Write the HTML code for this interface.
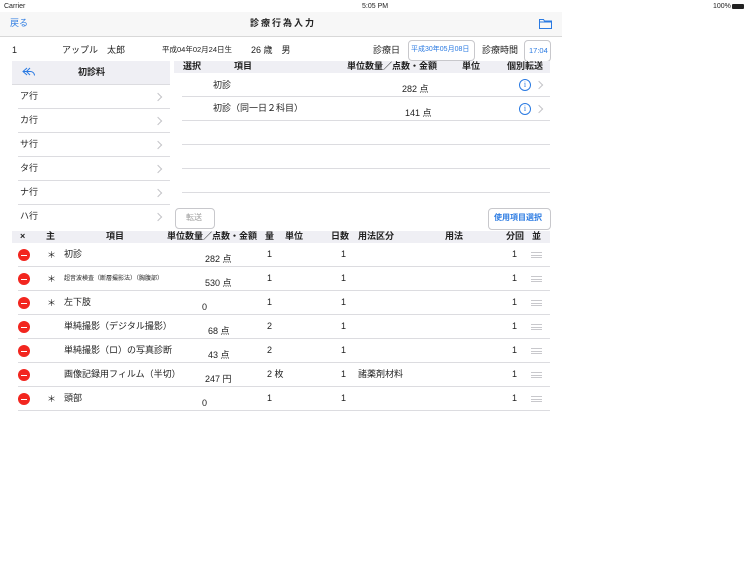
<!DOCTYPE html>
<html><head><meta charset="utf-8"><style>
body{margin:0;width:750px;height:562px;background:#fff;font-family:"Liberation Sans","Noto Sans CJK JP",sans-serif;font-size:9px;color:#222;position:relative;overflow:hidden}
.a{position:absolute;white-space:nowrap;line-height:1}
.b{font-weight:bold}
.blue{color:#2a7ae2}
.hl{position:absolute;height:1px;background:#dcdce0}
.bar{position:absolute;background:#efeff4}
.chev{position:absolute;width:5px;height:5px;border-right:1px solid #c4c4c8;border-top:1px solid #c4c4c8;transform:rotate(45deg)}
.minus{position:absolute;width:12px;height:12px;border-radius:50%;background:#f2261f}
.minus:after{content:"";position:absolute;left:3px;top:5.5px;width:6px;height:1.3px;background:#fff}
.grip{position:absolute;width:11px;height:4px;border-top:1px solid #c8c8cc;border-bottom:1px solid #c8c8cc}
.grip:after{content:"";position:absolute;left:0;top:1.5px;width:11px;height:1px;background:#c8c8cc}
.info{position:absolute;width:10px;height:10px;border:1px solid #2a7ae2;border-radius:50%;color:#2a7ae2;font-size:8px;text-align:center;line-height:10px;font-family:"Liberation Serif",serif}
.btn{position:absolute;border:1px solid #c8c8cc;border-radius:4px;background:#fff}
</style></head><body>
<div class="a" style="left:4px;top:3px;font-size:7px">Carrier ︎</div>
<div class="a" style="left:362px;top:3px;font-size:7px">5:05 PM</div>
<div class="a" style="left:713px;top:3px;font-size:7px">100%</div>
<div style="position:absolute;left:732px;top:4px;width:12px;height:5px;background:#222;border-radius:1px"></div>
<div style="position:absolute;left:0;top:12px;width:562px;height:24px;background:#f7f7f7;border-bottom:1px solid #d8d8d8"></div>
<div class="a blue" style="left:10px;top:19px">戻る</div>
<div class="a b" style="left:250px;top:19px;letter-spacing:2px">診療行為入力</div>
<svg style="position:absolute;left:539px;top:18px" width="13" height="11"><path d="M0.5 1.5h4l1 1.5h7v7.5h-12z M0.5 4h12" fill="none" stroke="#2a7ae2" stroke-width="1"/></svg>

<div class="a" style="left:12px;top:46px">1</div>
<div class="a" style="left:62px;top:46px">アップル　太郎</div>
<div class="a" style="left:162px;top:46px;font-size:7.5px">平成04年02月24日生</div>
<div class="a" style="left:251px;top:46px">26 歳　男</div>
<div class="a" style="left:373px;top:46px">診療日</div>
<div class="btn" style="left:408px;top:40px;width:65px;height:19px"></div>
<div class="a blue" style="left:411px;top:46px;font-size:7px">平成30年05月08日</div>
<div class="a" style="left:482px;top:46px">診療時間</div>
<div class="btn" style="left:524px;top:40px;width:25px;height:20px"></div>
<div class="a blue" style="left:529px;top:47px;font-size:7.5px">17:04</div>

<div class="bar" style="left:12px;top:61px;width:158px;height:23px"></div>
<svg style="position:absolute;left:22px;top:67px" width="14" height="10"><path d="M5 1L1 4.5L5 8 M1.5 4.5h7a4 4 0 0 1 4 4" fill="none" stroke="#2a7ae2" stroke-width="1"/><path d="M8 1L4.5 4.5L8 8" fill="none" stroke="#2a7ae2" stroke-width="1"/></svg>
<div class="a b" style="left:78px;top:68px">初診料</div>
<div class="hl" style="left:12px;top:84px;width:158px"></div>
<div class="a" style="left:20px;top:92px">ア行</div><div class="chev" style="left:155px;top:94px"></div><div class="hl" style="left:18px;top:108px;width:152px"></div>
<div class="a" style="left:20px;top:116px">カ行</div><div class="chev" style="left:155px;top:118px"></div><div class="hl" style="left:18px;top:132px;width:152px"></div>
<div class="a" style="left:20px;top:140px">サ行</div><div class="chev" style="left:155px;top:142px"></div><div class="hl" style="left:18px;top:156px;width:152px"></div>
<div class="a" style="left:20px;top:164px">タ行</div><div class="chev" style="left:155px;top:166px"></div><div class="hl" style="left:18px;top:180px;width:152px"></div>
<div class="a" style="left:20px;top:188px">ナ行</div><div class="chev" style="left:155px;top:190px"></div><div class="hl" style="left:18px;top:204px;width:152px"></div>
<div class="a" style="left:20px;top:212px">ハ行</div><div class="chev" style="left:155px;top:214px"></div>

<div class="bar" style="left:174px;top:61px;width:376px;height:12px"></div>
<div class="a b" style="left:183px;top:62px">選択</div>
<div class="a b" style="left:234px;top:62px">項目</div>
<div class="a b" style="left:347px;top:62px">単位数量／点数・金額</div>
<div class="a b" style="left:462px;top:62px">単位</div>
<div class="a b" style="left:507px;top:62px">個別転送</div>
<div class="a" style="left:213px;top:81px">初診</div>
<div class="a" style="left:402px;top:85px">282 点</div>
<div class="info" style="left:519px;top:79px">i</div><div class="chev" style="left:536px;top:82px"></div>
<div class="hl" style="left:182px;top:96px;width:368px"></div>
<div class="a" style="left:213px;top:104px">初診（同一日２科目）</div>
<div class="a" style="left:405px;top:109px">141 点</div>
<div class="info" style="left:519px;top:103px">i</div><div class="chev" style="left:536px;top:106px"></div>
<div class="hl" style="left:182px;top:120px;width:368px"></div>
<div class="hl" style="left:182px;top:144px;width:368px"></div>
<div class="hl" style="left:182px;top:168px;width:368px"></div>
<div class="hl" style="left:182px;top:192px;width:368px"></div>

<div class="btn" style="left:175px;top:208px;width:38px;height:19px"></div>
<div class="a" style="left:186px;top:214px;color:#999;font-size:8px">転送</div>
<div class="btn" style="left:488px;top:208px;width:61px;height:20px"></div>
<div class="a b blue" style="left:494px;top:214px;font-size:8px">使用項目選択</div>

<div class="bar" style="left:12px;top:231px;width:538px;height:12px"></div>
<div class="a b" style="left:20px;top:232px">×</div>
<div class="a b" style="left:46px;top:232px">主</div>
<div class="a b" style="left:106px;top:232px">項目</div>
<div class="a b" style="left:167px;top:232px">単位数量／点数・金額</div>
<div class="a b" style="left:265px;top:232px">量</div>
<div class="a b" style="left:285px;top:232px">単位</div>
<div class="a b" style="left:331px;top:232px">日数</div>
<div class="a b" style="left:358px;top:232px">用法区分</div>
<div class="a b" style="left:445px;top:232px">用法</div>
<div class="a b" style="left:506px;top:232px">分回</div>
<div class="a b" style="left:532px;top:232px">並</div>

<!-- rows -->
<div class="minus" style="left:18px;top:249px"></div><div class="a" style="left:47px;top:251px">＊</div><div class="a" style="left:64px;top:250px">初診</div><div class="a" style="left:205px;top:255px">282 点</div><div class="a" style="left:267px;top:250px">1</div><div class="a" style="left:341px;top:250px">1</div><div class="a" style="left:512px;top:250px">1</div><div class="grip" style="left:531px;top:252px"></div><div class="hl" style="left:18px;top:266px;width:532px"></div>
<div class="minus" style="left:18px;top:273px"></div><div class="a" style="left:47px;top:275px">＊</div><div class="a" style="left:64px;top:276px;font-size:6px">超音波検査（断層撮影法）（胸腹部）</div><div class="a" style="left:205px;top:279px">530 点</div><div class="a" style="left:267px;top:274px">1</div><div class="a" style="left:341px;top:274px">1</div><div class="a" style="left:512px;top:274px">1</div><div class="grip" style="left:531px;top:276px"></div><div class="hl" style="left:18px;top:290px;width:532px"></div>
<div class="minus" style="left:18px;top:297px"></div><div class="a" style="left:47px;top:299px">＊</div><div class="a" style="left:64px;top:298px">左下肢</div><div class="a" style="left:202px;top:303px">0</div><div class="a" style="left:267px;top:298px">1</div><div class="a" style="left:341px;top:298px">1</div><div class="a" style="left:512px;top:298px">1</div><div class="grip" style="left:531px;top:300px"></div><div class="hl" style="left:18px;top:314px;width:532px"></div>
<div class="minus" style="left:18px;top:321px"></div><div class="a" style="left:64px;top:322px">単純撮影（デジタル撮影）</div><div class="a" style="left:208px;top:327px">68 点</div><div class="a" style="left:267px;top:322px">2</div><div class="a" style="left:341px;top:322px">1</div><div class="a" style="left:512px;top:322px">1</div><div class="grip" style="left:531px;top:324px"></div><div class="hl" style="left:18px;top:338px;width:532px"></div>
<div class="minus" style="left:18px;top:345px"></div><div class="a" style="left:64px;top:346px">単純撮影（ロ）の写真診断</div><div class="a" style="left:208px;top:351px">43 点</div><div class="a" style="left:267px;top:346px">2</div><div class="a" style="left:341px;top:346px">1</div><div class="a" style="left:512px;top:346px">1</div><div class="grip" style="left:531px;top:348px"></div><div class="hl" style="left:18px;top:362px;width:532px"></div>
<div class="minus" style="left:18px;top:369px"></div><div class="a" style="left:64px;top:370px">画像記録用フィルム（半切）</div><div class="a" style="left:205px;top:375px">247 円</div><div class="a" style="left:267px;top:370px">2 枚</div><div class="a" style="left:341px;top:370px">1</div><div class="a" style="left:358px;top:370px">諸薬剤材料</div><div class="a" style="left:512px;top:370px">1</div><div class="grip" style="left:531px;top:372px"></div><div class="hl" style="left:18px;top:386px;width:532px"></div>
<div class="minus" style="left:18px;top:393px"></div><div class="a" style="left:47px;top:395px">＊</div><div class="a" style="left:64px;top:394px">頭部</div><div class="a" style="left:202px;top:399px">0</div><div class="a" style="left:267px;top:394px">1</div><div class="a" style="left:341px;top:394px">1</div><div class="a" style="left:512px;top:394px">1</div><div class="grip" style="left:531px;top:396px"></div><div class="hl" style="left:18px;top:410px;width:532px"></div>
</body></html>
